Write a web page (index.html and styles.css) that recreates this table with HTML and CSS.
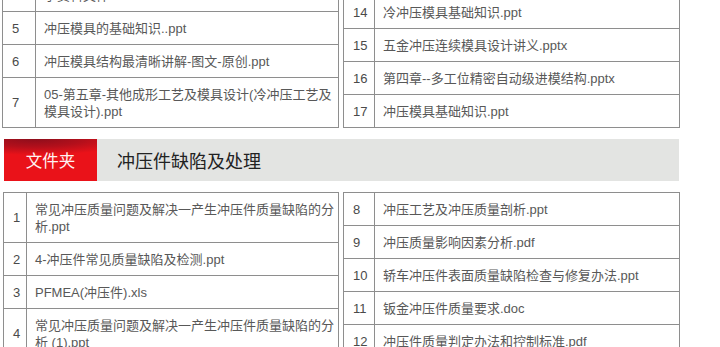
FILE: index.html
```html
<!DOCTYPE html>
<html lang="zh">
<head>
<meta charset="utf-8">
<link rel="stylesheet" href="styles.css">
</head>
<body>
<div class="page">
  <div class="top">
    <table class="list list-left">
      <colgroup><col class="num-w"><col></colgroup>
      <tr class="two"><td class="num">4</td><td>冷冲压模具设计与制造-冲压工艺与模具设计全套教学资料文件</td></tr>
      <tr><td class="num">5</td><td>冲压模具的基础知识..ppt</td></tr>
      <tr><td class="num">6</td><td>冲压模具结构最清晰讲解-图文-原创.ppt</td></tr>
      <tr><td class="num">7</td><td>05-第五章-其他成形工艺及模具设计(冷冲压工艺及模具设计).ppt</td></tr>
    </table>
    <table class="list list-right">
      <colgroup><col class="num-w"><col></colgroup>
      <tr><td class="num">14</td><td>冷冲压模具基础知识.ppt</td></tr>
      <tr><td class="num">15</td><td>五金冲压连续模具设计讲义.pptx</td></tr>
      <tr><td class="num">16</td><td>第四章--多工位精密自动级进模结构.pptx</td></tr>
      <tr><td class="num">17</td><td>冲压模具基础知识.ppt</td></tr>
    </table>
  </div>

  <div class="folder">
    <div class="folder-tag">文件夹</div>
    <div class="folder-title">冲压件缺陷及处理</div>
  </div>

  <div class="bottom">
    <table class="list list-left narrow">
      <colgroup><col class="num-w"><col></colgroup>
      <tr><td class="num">1</td><td>常见冲压质量问题及解决一产生冲压件质量缺陷的分析.ppt</td></tr>
      <tr><td class="num">2</td><td>4-冲压件常见质量缺陷及检测.ppt</td></tr>
      <tr><td class="num">3</td><td>PFMEA(冲压件).xls</td></tr>
      <tr><td class="num">4</td><td>常见冲压质量问题及解决一产生冲压件质量缺陷的分析 (1).ppt</td></tr>
    </table>
    <table class="list list-right">
      <colgroup><col class="num-w"><col></colgroup>
      <tr><td class="num">8</td><td>冲压工艺及冲压质量剖析.ppt</td></tr>
      <tr><td class="num">9</td><td>冲压质量影响因素分析.pdf</td></tr>
      <tr><td class="num">10</td><td>轿车冲压件表面质量缺陷检查与修复办法.ppt</td></tr>
      <tr><td class="num">11</td><td>钣金冲压件质量要求.doc</td></tr>
      <tr><td class="num">12</td><td>冲压件质量判定办法和控制标准.pdf</td></tr>
    </table>
  </div>
</div>
</body>
</html>
```

FILE: styles.css
```css
html, body {
  margin: 0;
  padding: 0;
  background: #ffffff;
  overflow: hidden;
}

body {
  font-family: "Liberation Sans", "Noto Sans CJK SC", sans-serif;
  font-size: 13px;
  color: #585858;
}

.page {
  width: 720px;
  height: 347px;
  overflow: hidden;
}

.top {
  height: 128px;
  display: flex;
  align-items: flex-end;
  gap: 4px;
  padding-left: 2px;
}

.list {
  border-collapse: collapse;
  table-layout: fixed;
  width: 337px;
  flex: none;
}

.list td {
  border: 1px solid #8e8e8e;
  padding: 7.5px 2px 7.5px 8px;
  line-height: 17px;
  vertical-align: middle;
}

.list td.num {
  padding-left: 9px;
  padding-right: 0;
  color: #4a4a4a;
}

.list-left .num-w {
  width: 33px;
}

.list-left.narrow .num-w {
  width: 23px;
}

.list-right .num-w {
  width: 31px;
}

.folder {
  margin: 11px 0 0 4px;
  width: 675px;
  height: 42px;
  display: flex;
  align-items: center;
  background: #e3e4e2;
}

.folder-tag {
  width: 93px;
  height: 42px;
  display: flex;
  align-items: center;
  justify-content: center;
  color: #fff2f2;
  font-family: "Noto Sans CJK SC", sans-serif;
  font-size: 16.5px;
  background:
    radial-gradient(ellipse 100px 16px at 30px 0px, #8e0e1c 0%, rgba(150, 14, 28, 0.65) 50%, rgba(232, 18, 28, 0) 100%),
    #ea1219;
}

.folder-title {
  margin-left: 20px;
  font-family: "Noto Sans CJK SC", sans-serif;
  font-size: 18px;
  color: #222222;
}

.bottom {
  margin-top: 11px;
  display: flex;
  align-items: flex-start;
  gap: 4px;
  padding-left: 3px;
}

.bottom .list-left {
  width: 336px;
}
```
